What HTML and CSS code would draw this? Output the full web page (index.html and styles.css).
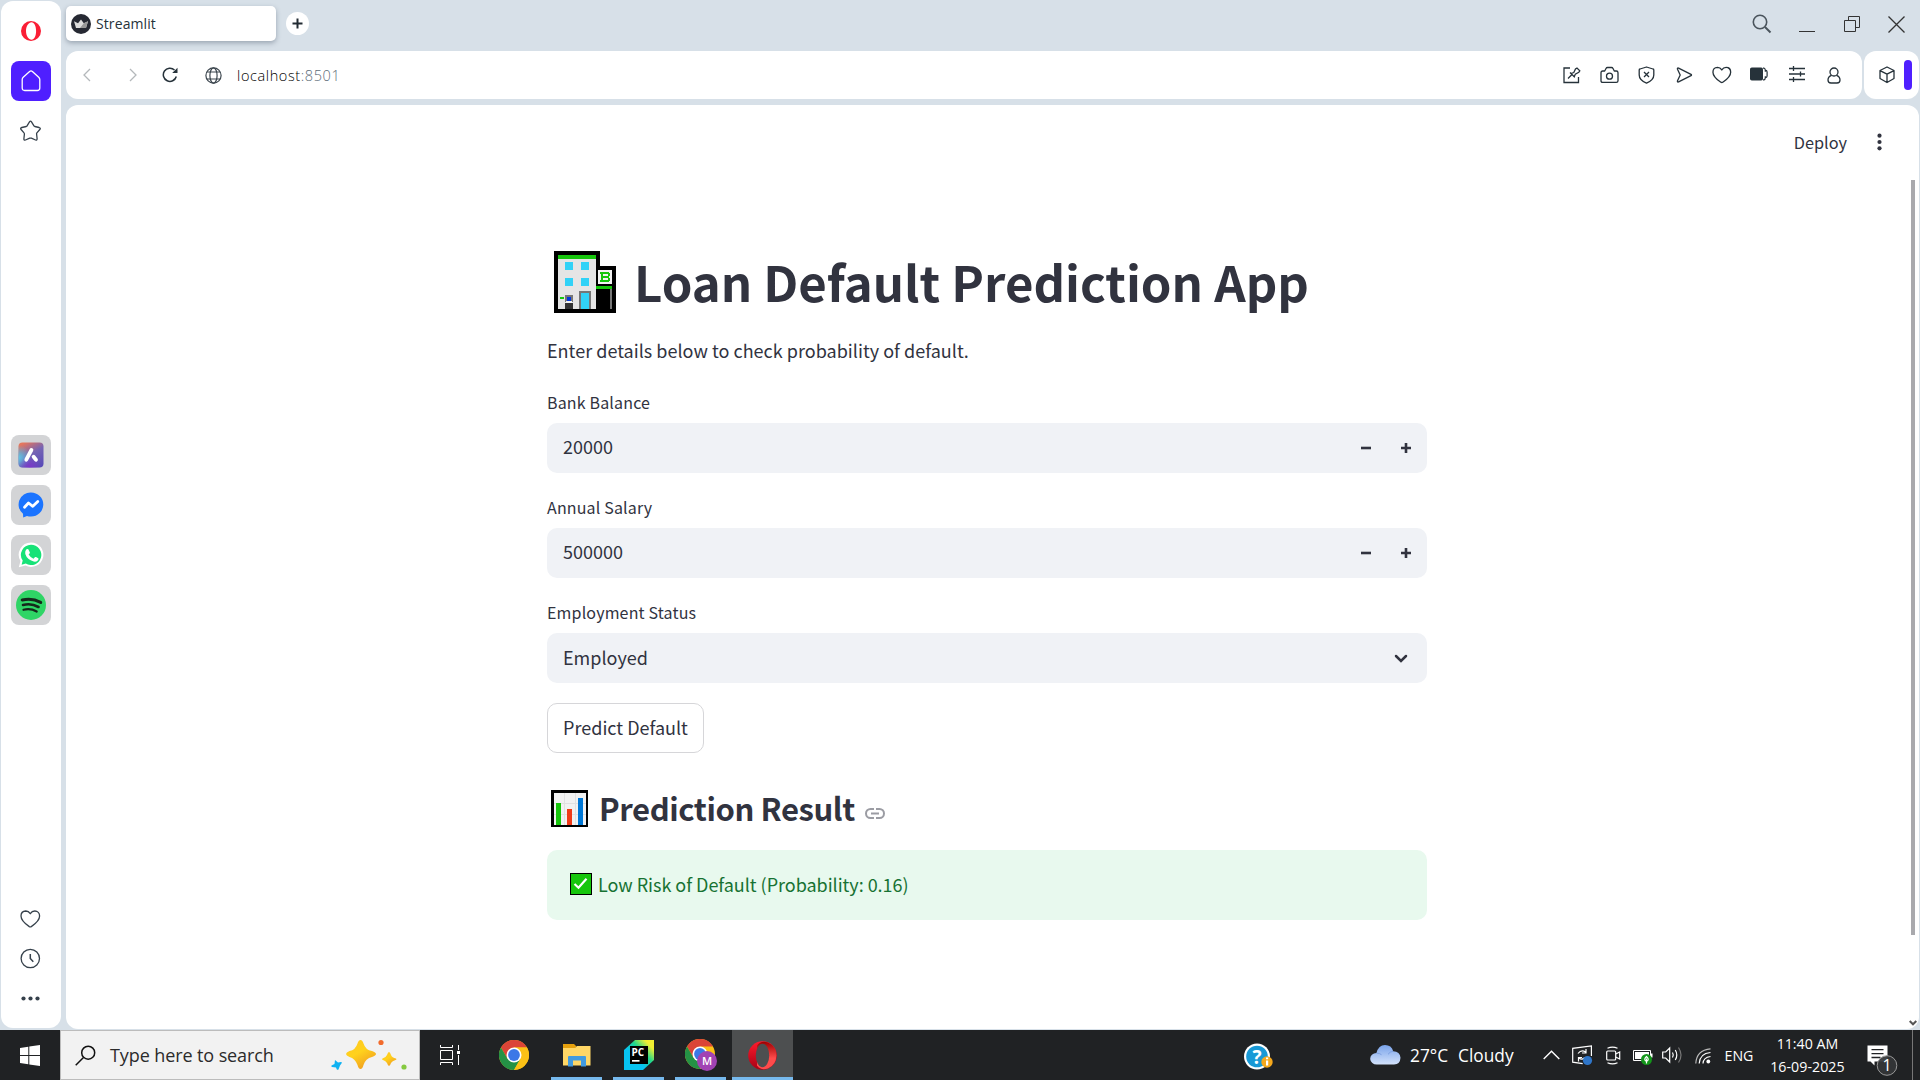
FILE: index.html
```html
<!DOCTYPE html>
<html lang="en">
<head>
<meta charset="utf-8">
<title>Streamlit</title>
<link rel="stylesheet" href="styles.css">
</head>
<body>
<div class="browser">
  <nav class="sidebar">
    <div class="side-top">
      <span class="side-slot"><svg width="20" height="20" viewBox="0 0 20 20"><path fill="#fa1e35" fill-rule="evenodd" d="M10 0a10 10 0 1 0 0 20a10 10 0 1 0 0-20zM10.500 1.300c2.700 0 4.600 3.700 4.600 8.700s-1.900 8.700-4.600 8.700S5 15 5 10s2.800-8.700 5.500-8.700z"/></svg></span>
      <span class="side-slot home"><svg width="20" height="22" viewBox="0 0 20 22" fill="none" stroke="#fff" stroke-width="1.300" stroke-linejoin="round"><path d="M1.200 9.500c0-.9.300-1.500 1-2.200L8.600 1.500q1.400-1.200 2.800 0l6.300 5.800c.7.700 1.100 1.300 1.100 2.200V18q0 2.500-2.500 2.500H3.700Q1.200 20.500 1.200 18z"/></svg></span>
      <span class="side-slot"><svg width="22" height="22" viewBox="0 0 22 22" fill="none" stroke="#36414b" stroke-width="1.300" stroke-linejoin="round"><path d="M9.500 1.900q1-1.400 2 0l2.300 3.800q.4.600 1 .8l4.300 1q1.900.6.700 2l-2.900 3.400q-.4.500-.3 1.100l.5 4.800q0 1.700-1.600 1.200l-4.100-1.800q-.9-.3-1.700 0L5.500 20q-1.700.5-1.600-1.200l.5-4.800q0-.7-.4-1.100L1.100 9.500q-1.100-1.500.7-2l4.500-1q.6-.2.900-.8z"/></svg></span>
    </div>
    <div class="side-apps">
      <span class="tile"><svg width="26" height="26" viewBox="0 0 26 26"><defs><linearGradient id="aria" x1=".25" y1="0" x2=".8" y2="1"><stop offset="0" stop-color="#e5765d"/><stop offset=".45" stop-color="#7564b4"/><stop offset="1" stop-color="#5a4bb8"/></linearGradient><radialGradient id="cyan" cx="0" cy=".6" r=".5"><stop offset="0" stop-color="#5ec8e4"/><stop offset="1" stop-color="#5ec8e4" stop-opacity="0"/></radialGradient><radialGradient id="vio" cx=".45" cy="1" r=".45"><stop offset="0" stop-color="#7c36c9"/><stop offset="1" stop-color="#7c36c9" stop-opacity="0"/></radialGradient></defs><rect x=".5" y=".5" width="25" height="25" rx="4" fill="url(#aria)"/><rect x=".5" y=".5" width="25" height="25" rx="4" fill="url(#cyan)"/><rect x=".5" y=".5" width="25" height="25" rx="4" fill="url(#vio)"/><path d="M13.400 8L8.300 17.700M15.600 14.800l2.400 3" stroke="#fff" stroke-width="3.800" stroke-linecap="round"/></svg></span>
      <span class="tile"><svg width="26" height="26" viewBox="0 0 26 26"><path fill="#1b74ff" d="M13 .5a12.300 12 0 0 1 0 24c-1.500 0-2.800-.2-4-.6l-3.800 1.600-.2-3.700A12 12 0 0 1 13 .5z"/><path fill="none" stroke="#fff" stroke-width="2.800" stroke-linejoin="round" stroke-linecap="round" d="M6.500 15.300l4-4.300 4.300 3.300 5-4.800"/></svg></span>
      <span class="tile"><svg width="26" height="26" viewBox="0 0 26 26"><path fill="#fff" d="M13 .5a12.200 12.200 0 1 1-5.500 23L.8 25.300l1.700-6.300A12.200 12.200 0 0 1 13 .5z"/><path fill="#17e277" d="M13 2.700a10.200 10.200 0 1 1-5.200 18.900l-4.200 1.200 1.100-4.200A10.200 10.200 0 0 1 13 2.700z"/><path fill="#fff" d="M8 7.800q1.200-1.300 2.300-.5l1.600 3.300q0 .8-1.300 2 1.900 3.100 4.900 4.200l1.600-1.700q.6-.5 3.100 1.200.6.400.1 1.500-1.300 2.500-4.600 1.800Q9 17.500 7.300 12q-.5-2.500.7-4.200z"/></svg></span>
      <span class="tile"><svg width="30" height="30" viewBox="0 0 30 30"><circle cx="15" cy="15" r="15" fill="#2fd566"/><g fill="none" stroke="#15281c" stroke-linecap="round"><path stroke-width="3" d="M6.200 10q9.800-2.500 18.500 2.400"/><path stroke-width="2.600" d="M7 15q8.200-2.200 15.500 2"/><path stroke-width="2.200" d="M7.500 19.800q7-1.800 13.200 1.700"/></g></svg></span>
    </div>
    <div class="side-bottom">
      <span class="side-slot"><svg width="21" height="18" viewBox="0 0 21 18" fill="none" stroke="#36414b" stroke-width="1.300"><path stroke-linejoin="round" d="M10.300 3.700Q8.500 1 5.800 1 1 1.200 1 6c0 4.200 5.500 8.700 8.300 10.600q1 .6 2 0C14.100 14.700 19.600 10.200 19.600 6c0-3-2-5-4.800-5Q12 1 10.300 3.700z"/></svg></span>
      <span class="side-slot"><svg width="21" height="21" viewBox="0 0 21 21" fill="none" stroke="#36414b" stroke-width="1.300"><circle cx="10.300" cy="10.500" r="9.200"/><path stroke-width="1.500" d="M10.300 6v4.500l3 3.300"/></svg></span>
      <span class="side-slot"><svg width="19" height="5" viewBox="0 0 19 5" fill="#36414b"><circle cx="2.500" cy="2.500" r="2.100"/><circle cx="9.500" cy="2.500" r="2.100"/><circle cx="16.500" cy="2.500" r="2.100"/></svg></span>
    </div>
  </nav>

  <div class="window">
    <header class="tabs">
      <div class="tab">
        <svg width="20" height="20" viewBox="0 0 20 20"><circle cx="10" cy="10" r="10" fill="#262933"/><path fill="#ddd" d="M3 7.200l4 2 3-3.700 2.800 3.800L17 7.200 15 14H5z"/><path fill="#999" d="M12.800 9.300L17 7.200 15 14H9z"/></svg>
        <span>Streamlit</span>
      </div>
      <span class="new-tab"><svg width="11" height="11" viewBox="0 0 11 11" stroke="#222b33" stroke-width="2"><path d="M5.500.5v10M.5 5.500h10"/></svg></span>
      <div class="win-buttons">
        <span><svg width="20" height="20" viewBox="0 0 20 20" fill="none" stroke="#4a545c" stroke-width="1.600"><circle cx="8" cy="8" r="6.700"/><path stroke-width="2" d="M13 13l5.500 5.500"/></svg></span>
        <span><svg width="16" height="17" viewBox="0 0 16 17"><path stroke="#333" d="M0 15.500h16"/></svg></span>
        <span><svg width="16" height="16" viewBox="0 0 16 16" fill="none" stroke="#333"><path d="M.5 4.500h11v11H.5zM4.500 4.500v-4h11v11h-4"/></svg></span>
        <span><svg width="17" height="17" viewBox="0 0 17 17" stroke="#333" stroke-width="1.300"><path d="M.5.5l16 16M16.500.5l-16 16"/></svg></span>
      </div>
    </header>

    <div class="bars">
      <div class="toolbar">
        <div class="nav-buttons">
          <svg width="8" height="14" viewBox="0 0 8 14" fill="none" stroke="#b4b8bb" stroke-width="1.300"><path d="M7 1L1 7l6 6"/></svg>
          <svg width="8" height="14" viewBox="0 0 8 14" fill="none" stroke="#b4b8bb" stroke-width="1.300"><path d="M1 1l6 6-6 6"/></svg>
          <svg width="16" height="16" viewBox="0 0 16 16" fill="none" stroke="#26323a" stroke-width="1.500"><path d="M14.300 9.500A6.600 6.600 0 1 1 12.500 3"/><path fill="#26323a" stroke="none" d="M15.500.8v5.200h-5.300z"/></svg>
          <svg width="17" height="17" viewBox="0 0 17 17" fill="none" stroke="#3d474f" stroke-width="1.200"><circle cx="8.500" cy="8.500" r="7.600"/><ellipse cx="8.500" cy="8.500" rx="3.600" ry="7.600"/><path d="M2 5h13M2 12h13"/></svg>
        </div>
        <div class="url">localhost<span>:8501</span></div>
        <div class="tools">
          <span><svg width="18" height="18" viewBox="0 0 18 18" fill="none" stroke="#26323a" stroke-width="1.300"><path d="M7 2H1v14.500h14.500V11M5 12.500l4-4M7 6.500l4.500 4.500M8 7.500l2.800-1 1.700-3.500L14 2l2.800 2.800-1 1.500-3.500 1.800-1 2.800z"/></svg></span>
          <span><svg width="19" height="18" viewBox="0 0 19 18" fill="none" stroke="#26323a" stroke-width="1.300"><path stroke-linejoin="round" d="M1 6.700q0-1.700 1.700-1.700h2L6 2.500Q6.500 1.500 7.500 1.500h4q1 0 1.500 1L14.300 5h2Q18 5 18 6.700v8q0 1.700-1.700 1.700H2.700Q1 16.400 1 14.700z"/><circle cx="9.500" cy="10.200" r="3"/></svg></span>
          <span><svg width="17" height="18" viewBox="0 0 17 18" fill="none" stroke="#26323a" stroke-width="1.300"><path stroke-linejoin="round" d="M8.500 1l6.500 2q.8.200.8 1v5c0 4.500-4 6.700-7.300 8.200C5 15.700 1.200 13.500 1.200 9V4q0-.8.800-1z"/><path d="M6 6l5 5M11 6l-5 5"/></svg></span>
          <span><svg width="17" height="16" viewBox="0 0 17 16" fill="none" stroke="#26323a" stroke-width="1.300" stroke-linejoin="round"><path d="M1.500 2.200Q1 .6 2.600 1.100L15 7.300q1 .7 0 1.400L2.600 14.900Q1 15.400 1.500 13.800L4.200 8z"/></svg></span>
          <span><svg width="20" height="18" viewBox="0 0 21 18" fill="none" stroke="#26323a" stroke-width="1.400"><path stroke-linejoin="round" d="M10.300 3.700Q8.500 1 5.800 1 1 1.200 1 6c0 4.200 5.500 8.700 8.300 10.600q1 .6 2 0C14.100 14.700 19.600 10.200 19.600 6c0-3-2-5-4.800-5Q12 1 10.300 3.700z"/></svg></span>
          <span class="raised"><svg width="18" height="14" viewBox="0 0 18 14"><rect y=".5" width="13" height="13" rx="1.800" fill="#26323a"/><path fill="none" stroke="#26323a" stroke-width="1.200" d="M13 1.200h1q1 0 1.300 2 1.800.3 1.800 1.800v4q0 1.500-1.800 1.800Q15 12.800 14 12.800h-1M15.300 3.200v1.500M15.300 9.300v1.500"/></svg></span>
          <span class="raised"><svg width="16" height="16" viewBox="0 0 16 16" stroke="#26323a" stroke-width="1.300"><path d="M0 2.500h16M0 8h16M0 13.500h16M4.500 0v5M11.500 5.500v5M4.500 11v5"/></svg></span>
          <span><svg width="14" height="17" viewBox="0 0 14 17" fill="none" stroke="#26323a" stroke-width="1.300"><circle cx="7" cy="5" r="4"/><path d="M4.500 8.300Q1 9.500 1 13q0 3 3 3h6q3 0 3-3 0-3.500-3.500-4.700"/></svg></span>
        </div>
      </div>
      <div class="extras">
        <svg width="16" height="18" viewBox="0 0 16 18" fill="none" stroke="#26323a" stroke-width="1.300" stroke-linejoin="round"><path d="M8 1l7 3.500v8L8 16.500l-7-4v-8zM1 4.700l7 3.500 7-3.500M8 8.200v8"/></svg>
        <i></i>
      </div>
    </div>

    <div class="page">
      <div class="app">
        <div class="app-header">
          <span>Deploy</span>
          <svg width="5" height="18" viewBox="0 0 5 18" fill="#31333f"><circle cx="2.500" cy="2.700" r="2.100"/><circle cx="2.500" cy="9" r="2.100"/><circle cx="2.500" cy="15.300" r="2.100"/></svg>
        </div>
        <main class="column">
          <h1>
            <svg width="62" height="62" viewBox="0 0 62 62" shape-rendering="crispEdges"><path d="M0 0h46v15h16v47H0z"/><path fill="#e5e5e5" d="M4 8h38v50H4z"/><path fill="#16c60c" d="M4 4h38v4H4zM42 35h16v3H42zM6 46h4v2H6z"/><path fill="#31d2f7" d="M11 11h8v8h-8zM27 11h8v8h-8zM11 27h8v8h-8zM27 27h8v8h-8z"/><path fill="#767676" d="M11 44h8v7h-8zM25 40h12v18H25zM56 38h2v20h-2z"/><path fill="#31d2f7" d="M27 42h8v16h-8z"/><path fill="#0037da" d="M13 46h4v4h-4z"/><path fill="#f2f2f2" d="M12 50h6v2h-6zM44 19h14v14H44z"/><path fill="#333" d="M11 52h8v6h-8z"/><path fill="#16c60c" fill-rule="evenodd" d="M46 21h9v1h1v3h-1v2h1v3h-1v1h-9v-2h1v-6h-1zM49 23v2h5v-2zM49 27v2h5v-2z"/></svg>
            <span>Loan Default Prediction App</span>
          </h1>
          <p class="intro">Enter details below to check probability of default.</p>

          <div class="field">
            <label>Bank Balance</label>
            <div class="control">
              <span class="value">20000</span>
              <svg width="10" height="10" viewBox="0 0 10 10"><path stroke="#31333f" stroke-width="2.600" d="M0 5h10"/></svg>
              <svg width="10" height="10" viewBox="0 0 10 10"><path stroke="#31333f" stroke-width="2.600" d="M0 5h10M5 0v10"/></svg>
            </div>
          </div>
          <div class="field">
            <label>Annual Salary</label>
            <div class="control">
              <span class="value">500000</span>
              <svg width="10" height="10" viewBox="0 0 10 10"><path stroke="#31333f" stroke-width="2.600" d="M0 5h10"/></svg>
              <svg width="10" height="10" viewBox="0 0 10 10"><path stroke="#31333f" stroke-width="2.600" d="M0 5h10M5 0v10"/></svg>
            </div>
          </div>
          <div class="field">
            <label>Employment Status</label>
            <div class="control select">
              <span class="value">Employed</span>
              <svg width="14" height="9" viewBox="0 0 14 9" fill="none" stroke="#31333f" stroke-width="2.500" stroke-linecap="round"><path d="M2 2l5 5 5-5"/></svg>
            </div>
          </div>
          <button class="predict">Predict Default</button>

          <h3>
            <svg width="37" height="37" viewBox="0 0 37 37" shape-rendering="crispEdges"><path d="M0 0h37v37H0z"/><path fill="#f2f2f2" d="M3 3h32v32H3z"/><path stroke="#e1e1e1" d="M13.500 3v32M24.500 3v32M3 13.500h32M3 24.500h32"/><path fill="#16c60c" d="M5 13h5v22H5z"/><path fill="#f03a17" d="M16 19h5v16h-5z"/><path fill="#0078d7" d="M27 8h5v27h-5z"/></svg>
            <span>Prediction Result</span>
            <svg class="anchor" width="20" height="11" viewBox="0 0 20 11" fill="none" stroke="#9b9ca3" stroke-width="2"><path d="M9 1H5.500a4.500 4.500 0 0 0 0 9H9M11 1h3.500a4.500 4.500 0 0 1 0 9H11M6 5.500h8"/></svg>
          </h3>
          <div class="success">
            <svg width="22" height="22" viewBox="0 0 22 22"><path d="M0 0h22v22H0z"/><path fill="#16c60c" d="M1 1h20v20H1z"/><path fill="none" stroke="#fff" stroke-width="2.200" d="M4.500 11l4 3.700 8-9"/></svg>
            <span>Low Risk of Default (Probability: 0.16)</span>
          </div>
        </main>
      </div>
      <div class="scrollbar">
        <i></i>
        <svg width="8" height="6" viewBox="0 0 8 6" fill="none" stroke="#555" stroke-width="2"><path d="M.7 1L4 4.300 7.300 1"/></svg>
      </div>
    </div>
  </div>
</div>

<footer class="taskbar">
  <span class="start"><svg width="20" height="21" viewBox="0 0 20 21" fill="#fff"><path d="M0 3l8.300-1.200v8.200H0zM9.300 1.600L20 0v10H9.300zM0 11h8.300v8.200L0 18zM9.300 11H20v10L9.300 19.400z"/></svg></span>
  <div class="search">
    <svg width="21" height="21" viewBox="0 0 21 21" fill="none" stroke="#111" stroke-width="1.500"><circle cx="13.200" cy="7.700" r="6.500"/><path d="M8.500 12.500L.7 20.300"/></svg>
    <span>Type here to search</span>
    <svg class="sparkles" width="78" height="32" viewBox="0 0 78 32"><defs><linearGradient id="gold" x1="0" y1="0" x2=".6" y2="1"><stop offset="0" stop-color="#ffc524"/><stop offset=".5" stop-color="#ffd21c"/><stop offset="1" stop-color="#f1a021"/></linearGradient></defs><path fill="url(#gold)" d="M29.500 1q2 0 3 3.500Q34.500 11 41 12q4 1.500 4 3t-4 3q-6.500 1.500-8.500 8-1 4-3 4t-3-4Q24 19.500 18.500 18q-3.500-1.500-3.500-3t3.500-3Q24.500 11 26.500 4.500 27.500 1 29.500 1z"/><path fill="url(#gold)" d="M58 13q1 0 2 3 1 2.500 5 3.500 1 .7 0 1.200-4 1.300-5 3.300-1 3-2 3t-2-3q-1-2-4.500-3.300-1-.5 0-1.200Q55 18.500 56 16q1-3 2-3z"/><path fill="#0fb2f2" d="M4 21l3 2.500 3-.5q1 0 .8 1L9 26.500l-1.500 4q-1 .7-1.700 0L5 28.500l-4-.5q-1-.5-.5-1.500L3.500 25z"/><circle cx="50" cy="3.500" r="2.600" fill="#f26b2c"/><circle cx="73" cy="28" r="2.600" fill="#85c940"/></svg>
  </div>
  <div class="apps">
    <span class="task"><svg width="20" height="20" viewBox="0 0 20 20" fill="none" stroke="#fff"><path d="M.5 5.500h12v9H.5zM.5 0v2.500h12V0M.5 20v-2.500h12V20M18.500 0v5M18.500 10v10"/><path fill="#fff" stroke="none" d="M17 6h3v3h-3z"/></svg></span>
    <span class="task"><svg width="30" height="30" viewBox="0 0 30 30"><circle cx="15" cy="15" r="15" fill="#fbc116"/><path fill="#db4437" d="M2 7.500A15 15 0 0 1 28 7.500H15L8.500 18.800z"/><path fill="#249245" d="M2 7.500A15 15 0 0 0 15 30l6.500-11.200H8.500z"/><path fill="#fbc116" d="M15 7.500h13A15 15 0 0 1 15 30l6.500-11.200z"/><circle cx="15" cy="15" r="7.500" fill="#fff"/><circle cx="15" cy="15" r="5.900" fill="#3b78e7"/></svg></span>
    <span class="task running"><svg width="28" height="24" viewBox="0 0 28 24"><path fill="#e5a00d" d="M0 1h11l2.500 2.500L11 7H0z"/><path fill="#ffd766" d="M0 5h12l2-2h13.500v19.500H0z"/><path fill="#429bdf" d="M5 23.500V14q0-1 1-1h16q1 0 1 1v9.500h-5V17.500h-8v6z"/></svg></span>
    <span class="task running"><svg width="30" height="30" viewBox="0 0 30 30"><defs><linearGradient id="pyc" x1=".1" y1=".9" x2=".95" y2=".1"><stop offset=".35" stop-color="#07c3f2"/><stop offset=".62" stop-color="#21d789"/><stop offset=".9" stop-color="#f1ef32"/></linearGradient></defs><path fill="url(#pyc)" d="M11 0h19v20L19 30H0V10z"/><path d="M6 6h18v18H6z"/><text class="pyc" x="7.500" y="15.500">PC</text><path fill="#fff" d="M8 20h7.500v1.700H8z"/></svg></span>
    <span class="task running"><svg width="32" height="32" viewBox="0 0 32 32"><circle cx="15" cy="15" r="15" fill="#fbc116"/><path fill="#db4437" d="M2 7.500A15 15 0 0 1 28 7.500H15L8.500 18.800z"/><path fill="#249245" d="M2 7.500A15 15 0 0 0 15 30l6.500-11.200H8.500z"/><circle cx="15" cy="15" r="7.500" fill="#fff"/><circle cx="15" cy="15" r="5.900" fill="#3b78e7"/><circle cx="22" cy="22" r="10" fill="#a142b4"/><text class="profile" x="22" y="26">M</text></svg></span>
    <span class="task running active"><svg width="29" height="29" viewBox="0 0 29 29"><defs><linearGradient id="op" x1="0" y1="0" x2="0" y2="1"><stop offset="0" stop-color="#ff1b2d"/><stop offset="1" stop-color="#a70014"/></linearGradient><linearGradient id="op2" x1="0" y1="0" x2="0" y2="1"><stop offset="0" stop-color="#9c0000"/><stop offset=".6" stop-color="#ff4b4b"/></linearGradient></defs><circle cx="14.500" cy="14.500" r="14.300" fill="url(#op)"/><path fill="url(#op2)" d="M9 4.500Q13-1 20 1.500a14.300 14.300 0 0 1 0 26Q13 30 9 24.500z"/><ellipse cx="14.500" cy="14.500" rx="6.700" ry="11.800" fill="#4d4f50"/></svg></span>
  </div>
  <div class="help"><svg width="30" height="30" viewBox="0 0 30 30"><circle cx="13" cy="13.500" r="13" fill="#fff"/><circle cx="13" cy="13.500" r="10.800" fill="#1899d6"/><text class="q" x="13" y="20.500">?</text><circle cx="23" cy="19" r="5.700" fill="#f5a81c"/><path fill="#fff" d="M22 17.500h2.200v5H22zM22 14.500h2.200v1.800H22z"/></svg></div>
  <div class="weather">
    <svg width="31" height="20" viewBox="0 0 31 20"><defs><linearGradient id="cl" x1="0" y1="0" x2="0" y2="1"><stop offset="0" stop-color="#79a3ea"/><stop offset="1" stop-color="#d3e2fb"/></linearGradient></defs><path fill="url(#cl)" d="M7 19.500a6.500 5.700 0 0 1-.5-11.500Q8.500 0 15 0q6.500 0 8.200 6.200Q30 6.500 30.500 12.700q-.3 6.500-6.500 6.800z"/><path fill="none" stroke="#7d9fe0" d="M6.500 8.200q3-.2 5 1.500M23 6.300q-3 .2-5 3"/></svg>
    <span>27°C</span><span>Cloudy</span>
  </div>
  <div class="tray">
    <svg class="chev" width="17" height="10" viewBox="0 0 17 10" fill="none" stroke="#fff" stroke-width="1.400"><path d="M.7 9L8.500 1.200 16.300 9"/></svg>
    <svg class="sync" width="21" height="21" viewBox="0 0 21 21" fill="none" stroke="#fff" stroke-width="1.200"><path d="M19.400 11V.9L.7 3.300v13.900l10 1.500"/><path d="M6 8.500q3.500-4.500 7.500-1.500M14 4v4h-4M13 12.500q-3 3-6 .5M6.500 16.500v-4H10"/><circle cx="15.500" cy="15.500" r="4.600" fill="#2f76c9" stroke="none"/></svg>
    <svg class="cam" width="15" height="19" viewBox="0 0 15 19" fill="none" stroke="#fff" stroke-width="1.200"><rect x=".7" y="5" width="9" height="9" rx="1"/><path d="M9.700 8l4-2v7l-4-2M1.500 2.300Q6.500 0 11.500 2.300M1.500 16.700Q6.500 19 11.500 16.700"/></svg>
    <svg class="bat" width="20" height="16" viewBox="0 0 20 16"><path fill="none" stroke="#fff" d="M.5 1.500h17v10H.5z"/><path fill="#fff" d="M2 3h14v7H2zM18 4.500h1.500v4H18z"/><circle cx="13.500" cy="10.500" r="5.500" fill="#13961a"/><path fill="none" stroke="#fff" stroke-width="1.200" d="M13.500 7.500q-3.500 3 0 5 3.500-2 0-5zM13.500 9.500v5"/></svg>
    <svg class="vol" width="21" height="20" viewBox="0 0 21 20" fill="none" stroke="#fff" stroke-width="1.200"><path d="M.7 7h3l4-4v14l-4-4h-3zM10.500 7.500q1.500 2.500 0 5M13.300 5q3 5 0 10"/><path stroke="#777" d="M16.500 2.500q5 7.500 0 15"/></svg>
    <svg class="wifi" width="16" height="16" viewBox="0 0 16 16" fill="none" stroke="#fff" stroke-width="1.200"><path stroke="#bbb" d="M.8 15.500Q1.500 2 15.500.8"/><path d="M4.200 15.500Q4.700 5.500 15.500 4.500M8 15.500Q8.200 9.500 15.500 8.500"/><circle cx="13.300" cy="13.500" r="1.900" fill="#fff" stroke="none"/></svg>
    <span class="lang">ENG</span>
    <div class="clock"><span>11:40 AM</span><span class="date">16-09-2025</span></div>
    <svg class="notes" width="31" height="31" viewBox="0 0 31 31"><path fill="#fff" d="M.500.500h20v16H7.500v4l-4-4h-3z"/><path stroke="#202224" stroke-width="1.300" d="M4.500 4.700h12M4.500 8.700h12M4.500 12.500h9"/><circle cx="20" cy="20.500" r="9.800" fill="#343638" fill-opacity=".93" stroke="#999"/><text class="count" x="20" y="26">1</text></svg>
    <i class="show-desktop"></i>
  </div>
</footer>
</body>
</html>
```

FILE: styles.css
```css
* { box-sizing: border-box; }
body {
  margin: 0;
  width: 1920px;
  height: 1080px;
  overflow: hidden;
  display: grid;
  grid-template-rows: 1030px 50px;
  background: #d7e0e8;
  font-family: "Open Sans", "Noto Sans", sans-serif;
}
svg { display: block; flex: none; }

.browser { display: flex; gap: 5px; padding: 1px 1px 1px 1px; min-height: 0; }

/* Left rail */
.sidebar {
  width: 60px;
  height: 1027px;
  background: #fff;
  border-radius: 12px;
  display: flex;
  flex-direction: column;
  align-items: center;
  padding: 10px 0 9px;
}
.side-slot { width: 40px; height: 40px; display: flex; align-items: center; justify-content: center; }
.side-top { display: flex; flex-direction: column; gap: 10px; }
.home { background: #4f1fff; border-radius: 8px; }
.side-apps { display: flex; flex-direction: column; gap: 10px; margin-top: 284px; }
.tile {
  width: 40px;
  height: 40px;
  border-radius: 8px;
  background: #d3d4d6;
  display: flex;
  align-items: center;
  justify-content: center;
}
.side-bottom { margin-top: auto; }
.side-bottom .side-slot { padding: 0 1px 1px 0; }

/* Browser window */
.window { flex: 1; display: flex; flex-direction: column; }
.tabs { height: 50px; display: flex; align-items: flex-start; padding-top: 5px; }
.tab {
  width: 210px;
  height: 35px;
  border-radius: 5px;
  background: #fff;
  box-shadow: 0 2px 5px rgba(60, 75, 95, .4);
  display: flex;
  align-items: center;
  gap: 5px;
  padding-left: 5px;
  font-size: 14px;
  color: #26323a;
}
.tab span { letter-spacing: .1px; }
.new-tab {
  width: 23px;
  height: 23px;
  border-radius: 50%;
  background: #fff;
  margin: 6px 0 0 10px;
  display: flex;
  align-items: center;
  justify-content: center;
}
.win-buttons { display: flex; margin-left: auto; height: 36px; }
.win-buttons span { width: 45px; display: flex; align-items: center; justify-content: center; }

.bars { display: flex; gap: 2px; height: 48px; }
.toolbar {
  width: 1796px;
  height: 48px;
  background: #fff;
  border-radius: 12px;
  display: flex;
  align-items: center;
  padding: 0 9px 0 17px;
}
.nav-buttons { display: flex; align-items: center; }
.nav-buttons svg + svg { margin-left: 38px; }
.nav-buttons svg:nth-child(3) { margin-left: 25px; }
.nav-buttons svg:nth-child(4) { margin-left: 27px; }
.url { margin-left: 15px; font-size: 14.500px; font-weight: 300; letter-spacing: .6px; color: #000; }
.url span { color: #5d6c79; }
.tools { display: flex; margin-left: auto; height: 46px; }
.tools span { width: 37.500px; display: flex; align-items: center; justify-content: center; }
.tools .raised { padding-bottom: 3px; }
.extras {
  width: 55px;
  background: #fff;
  border-radius: 12px;
  display: flex;
  align-items: center;
  padding-left: 15px;
  gap: 9px;
}
.extras i { width: 8px; height: 30px; border-radius: 4px; background: #4f1fff; }

/* Page */
.page {
  margin-top: 6px;
  width: 1853px;
  height: 924px;
  background: #fff;
  border-radius: 12px;
  display: flex;
  font-family: "Noto Sans CJK SC", "Noto Sans", sans-serif;
  color: #31333f;
}
.app { flex: 1; }
.app-header {
  height: 74px;
  display: flex;
  align-items: center;
  justify-content: flex-end;
  gap: 30px;
  padding-right: 26px;
  font-size: 16.300px;
}
.column { width: 880px; margin: 68px auto 0; }
h1 {
  margin: 0;
  height: 66px;
  display: flex;
  align-items: flex-end;
  gap: 18px;
  padding-left: 7px;
  font-size: 49.100px;
  font-weight: 700;
  line-height: 65px;
  white-space: nowrap;
}
.intro { margin: 22px 0 23px; font-size: 18px; line-height: 30px; letter-spacing: .02px; }
.field { margin-bottom: 20px; }
label { display: block; font-size: 16px; letter-spacing: .16px; line-height: 28px; height: 28px; margin-bottom: 7px; }
.control {
  height: 50px;
  border-radius: 10px;
  background: #f0f2f6;
  display: flex;
  align-items: center;
  gap: 30px;
  padding: 0 16px;
  font-size: 18px;
}
.value { flex: 1; padding-bottom: 4px; line-height: 26px; }
.select { padding-right: 19px; }
.select .value { padding-bottom: 3px; }
.predict {
  display: block;
  width: 157px;
  height: 50px;
  padding: 0 0 3px;
  border: 1px solid #d6d6d9;
  border-radius: 10px;
  background: #fff;
  font: 18px/26px "Noto Sans CJK SC", "Noto Sans", sans-serif;
  color: #31333f;
}
h3 {
  margin: 35px 0 22px;
  height: 40px;
  display: flex;
  align-items: center;
  gap: 10px;
  padding-left: 4px;
  font-size: 31px;
  font-weight: 700;
  line-height: 40px;
  letter-spacing: -.4px;
}
h3 span { margin-left: 1px; }
.anchor { margin-top: 10px; }
.success {
  height: 70px;
  border-radius: 10px;
  background: #e8f9ee;
  display: flex;
  align-items: center;
  gap: 6px;
  padding: 0 0 2px 23px;
  font-size: 18px;
  letter-spacing: -.03px;
  line-height: 26px;
  color: #177233;
}
.success span { padding-bottom: 1px; }
.scrollbar {
  width: 11px;
  display: flex;
  flex-direction: column;
  align-items: center;
  justify-content: space-between;
  padding: 75px 3px 3px 2px;
}
.scrollbar i { width: 4px; height: 755px; background: #a9a9ad; }

/* Taskbar */
.taskbar { background: #202224; display: flex; color: #fff; }
.start { width: 60px; padding-left: 20px; display: flex; align-items: center; }
.search {
  width: 360px;
  background: #f2f2f2;
  border: 1px solid #bcbcbc;
  display: flex;
  align-items: center;
  padding-left: 14px;
  font-size: 18px;
  letter-spacing: -.1px;
  color: #2b2b2b;
}
.search span { margin-left: 14px; }
.sparkles { margin-left: auto; margin-right: 10px; }
.apps { display: flex; }
.task { width: 62px; display: flex; align-items: center; justify-content: center; }
.task:first-child { width: 64px; padding-right: 4px; }
.task:nth-child(2) { padding-right: 2px; }
.running { position: relative; }
.running::after { content: ""; position: absolute; left: 5px; right: 6px; bottom: 0; height: 3px; background: #76b9ed; }
.active { background: #4d4f50; width: 61px; }
.active::after { left: 0; right: 0; }
.pyc { font: 700 10px "Open Sans", sans-serif; fill: #fff; }
.profile { font: 600 11px "Open Sans", sans-serif; fill: #fff; text-anchor: middle; }
.q { font: 700 19px "Open Sans", sans-serif; fill: #fff; text-anchor: middle; }
.help { margin-left: 451px; padding-top: 13px; width: 30px; }
.weather { margin-left: 96px; display: flex; align-items: center; font-size: 17.300px; }
.weather span { margin-left: 9px; }
.weather span + span { margin-left: 10px; }
.tray { flex: 1; display: flex; align-items: center; font-size: 14.200px; }
.chev { margin-left: 29px; }
.sync { margin-left: 12px; }
.cam { margin-left: 13px; }
.bat { margin-left: 12px; margin-top: 4px; }
.vol { margin-left: 9px; }
.wifi { margin-left: 12px; margin-top: 1px; }
.lang { margin-left: 14px; }
.clock { margin-left: 15px; display: flex; flex-direction: column; align-items: center; line-height: 23px; width: 78px; }
.date { letter-spacing: .05px; }
.notes { margin-left: 21px; margin-top: 10px; }
.count { font: 16px "Open Sans", sans-serif; fill: #fff; text-anchor: middle; }
.show-desktop { width: 1px; height: 50px; background: #777; margin-left: 14px; }
```
